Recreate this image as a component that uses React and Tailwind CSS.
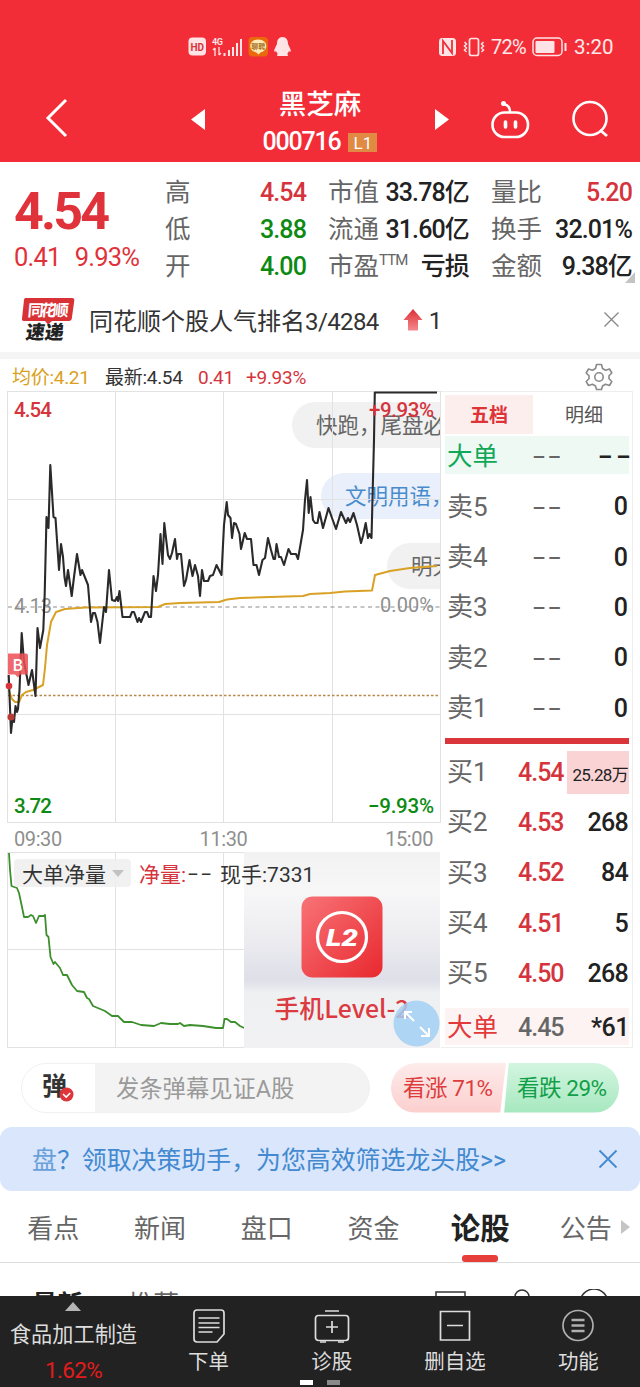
import React from 'react';
import clsx from 'clsx';

const PRICE_LINE =
    '8.7,675 11,733 12.5,718 14,722 15.5,706 17,712 18,709 19.5,690 21.7,633 24,662 28.5,685 32,670 35.5,696 37.5,628 40,648 43.3,630 44.7,594 46.5,517 48.5,528 50.3,465 53.5,517 55.5,518 59,570 61,544 63,557 64.5,577 66,586 68,570 71.7,596 74,577 77,554 80.5,575 82,570 88,585 91,622 93,613 95,613 97.5,622 100,643 104,607 106,612 109,570 112,600 115,601 117,597 118,601 119.5,591 122.5,617 130,617 132,612 134,612 137.5,622 139,618 141,622 145,612 147,612 149,617 151,617 153.5,576 156,591 158,575 160.5,534 162.5,564 164.3,523 166,538 168,555 170,559 172,553 175,539 177,559 178,554 181,554 184,586 186,580 189.5,560 192.5,576 195,565 198,576 200,596 202,570 204,581 208,581 210,576 213,575 216.5,565 219,570 221.5,575 224,525 226.7,502 228,515 230.5,518 232,538 234,523 236,524 239.5,534 241,549 244.7,533 247,539 251,539 253.5,565 256.5,565 259,575 262.5,560 265,558 268,538 271,550 273.5,559 275,559 276.5,544 279,557 281,557 284,565 288.5,549 291,554 296,554 298,559 303,530 305,500 307,480 308.7,513 310.5,497 313,520 315,523 317.5,523 319.5,512 323,528 328.5,508 332,518 336,529 341,512 346,523 348,518 350,522 353.5,513 357,525 361,543 363,536 365.7,523 368,538 369.5,534 371.5,538 374,440 374.8,392.5 437,392.5';

const AVG_LINE =
    '8.7,690 12,699 15,702 19,702 22,695 26,692 33,690 43,685 45,668 47,645 51,622 56,612 65,609 85,607.5 158,607 165,604 180,603 219,602 227,599.5 240,598 303,596 310,594 330,593 345,591.5 372,590.5 373.5,583 375,575 390,571 410,568 437,566';

const NET_LINE =
    '9,853 10,870 11.5,886 17,888 19,893 22,907 24,917 28,917 31,915 33,916 36,923 39,916 44,916 45,915 46.5,935 48.5,937 50.5,957 53.5,964 55,962 60,968 63,975 67,975 72,985 77,991 84,992 87,998 89,999 93,1006 105,1011 112,1016 118,1016 124,1022 132,1022 141,1025 154,1026 161,1023 170,1024 178,1024 180,1023 184,1026 190,1025 203,1026 216,1028 223,1028 224.5,1019 227,1019 231,1022 235,1022 240,1026 244,1028';

const sells = [5, 4, 3, 2, 1];

const buys = [
    { level: 1, price: '4.54', vol: '25.28万', hot: true },
    { level: 2, price: '4.53', vol: '268' },
    { level: 3, price: '4.52', vol: '84' },
    { level: 4, price: '4.51', vol: '5' },
    { level: 5, price: '4.50', vol: '268' },
];

const StatusBar = () => (
    <div className="flex h-[94px] items-center pl-[188px] pr-[26px] text-white/90">
        <svg width="106" height="22" viewBox="0 0 106 22">
            <rect x="0.5" y="1.5" width="17.5" height="18" rx="4" fill="#ffe3e5" />
            <text x="9.2" y="14.5" fontSize="10" fontWeight="700" textAnchor="middle" fill="#d8343c">HD</text>
            <text x="24" y="9" fontSize="9" fontWeight="700" textLength="11" fill="#ffe3e5">4G</text>
            <path d="M27 12v8M25 14l2-2M31 11v8M33 17l-2 2" stroke="#ffe3e5" strokeWidth="1.3" fill="none" />
            <path d="M36.5 20v-3M41 20v-6M45 20v-9M49 20v-13M53 20v-17" stroke="#ffe3e5" strokeWidth="2" />
            <rect x="60.5" y="1" width="19.5" height="19.5" rx="4" fill="#e9690c" />
            <path d="M70.3 3.5c5 0 8 3 8 6.5s-3 6-5.5 6.2L70.5 18.5 68 16.2c-3-.3-5.7-2.5-5.7-6.2s3-6.5 8-6.5z" fill="#ffe9b8" />
            <text x="70.3" y="13" fontSize="7" fontWeight="700" textAnchor="middle" fill="#a8741f">聊聘</text>
            <path d="M94.5 1c3.8 0 5.5 3 5.5 6.5 0 1.5 2.8 5 2.8 7.5 0 1.2-1.3.7-2 0-.2 1.2-1 2.3-1.8 3 1.5.5 1.5 2 0 2h-9c-1.5 0-1.5-1.5 0-2-.8-.7-1.6-1.8-1.8-3-.7.7-2 1.2-2 0 0-2.5 2.8-6 2.8-7.5C89 4 90.7 1 94.5 1z" fill="#ffe3e5" />
        </svg>
        <div className="ml-auto flex items-center">
            <svg width="48" height="20" viewBox="0 0 48 20">
                <path d="M3 1h10c3 0 4 1 4 4v10c0 3-1 4-4 4H4c-3 0-4-1-4-4V5c0-3 1-4 3-4z" fill="#ffe3e5" />
                <path d="M4 17V4l9 12V3" fill="none" stroke="#ef2f39" strokeWidth="1.8" />
                <rect x="30.5" y="1.5" width="9" height="17" rx="2" fill="none" stroke="#ffe3e5" strokeWidth="1.7" />
                <path d="M25.500 5l2 2-2 2 2 2-2 2 2 2M44.500 5l-2 2 2 2-2 2 2 2-2 2" fill="none" stroke="#ffe3e5" strokeWidth="1.5" />
            </svg>
            <span className="ml-1 w-[38px] text-[20px] tracking-[-0.04em]">72%</span>
            <svg className="ml-[3px]" width="36" height="20" viewBox="0 0 36 20">
                <rect x="1" y="1" width="29" height="17.5" rx="4" fill="none" stroke="#ffe3e5" strokeWidth="1.5" />
                <rect x="3.5" y="4" width="19" height="12" rx="1" fill="#ffe3e5" />
                <path d="M33.5 6v8" stroke="#ffe3e5" strokeWidth="2" />
            </svg>
            <span className="ml-[6px] w-[40px] text-[20.5px]">3:20</span>
        </div>
    </div>
);

const TitleBar = () => (
    <div className="flex h-[68px] items-start">
        <svg className="ml-[44px] mt-[3px]" width="26" height="42" viewBox="0 0 26 42">
            <path d="M22 3L4 21l18 18" fill="none" stroke="#fff" strokeWidth="3" />
        </svg>
        <svg className="ml-[121px] mt-[15px]" width="14" height="21" viewBox="0 0 14 21">
            <path d="M14 0v21L0 10.5z" fill="#fff" />
        </svg>
        <div className="-mt-[8px] flex w-[230px] flex-col items-center text-white">
            <h1 className="text-[27.5px] font-medium leading-[38px]">黑芝麻</h1>
            <div className="flex items-center leading-[36px]">
                <span className="text-[25px] font-medium tracking-[-0.05em]">000716</span>
                <span className="ml-2 h-[19px] w-[29px] bg-[#e08a43] text-center text-[17px] leading-[20px]">L1</span>
            </div>
        </div>
        <svg className="mt-[15px]" width="14" height="21" viewBox="0 0 14 21">
            <path d="M0 0v21l14-10.5z" fill="#fff" />
        </svg>
        <svg className="ml-[41px] mt-[6px]" width="41" height="40" viewBox="0 0 41 40">
            <rect x="2.5" y="12.5" width="35.5" height="24.5" rx="12" fill="none" stroke="#fff" strokeWidth="2.6" />
            <path d="M20 12c0-4-2-7-6-8" fill="none" stroke="#fff" strokeWidth="2.4" />
            <circle cx="13.5" cy="3.5" r="2.5" fill="#fff" />
            <path d="M15.5 22v5M25.5 22v5" stroke="#fff" strokeWidth="3.6" strokeLinecap="round" />
        </svg>
        <svg className="ml-[40px] mt-[6px]" width="40" height="40" viewBox="0 0 40 40">
            <circle cx="19" cy="18.5" r="16.5" fill="none" stroke="#fff" strokeWidth="2.6" />
            <path d="M29 30l7 6" stroke="#fff" strokeWidth="2.8" />
        </svg>
    </div>
);

const Stat = ({ label, value, sup, color = 'text-[#222]' }) => (
    <div className="flex h-[37px] items-center justify-between">
        <span className="flex whitespace-nowrap text-[25.5px] text-[#666]">
            {label}
            {sup && <sup className="top-0 -mt-px text-[15px] leading-[28px] tracking-[-0.06em]">{sup}</sup>}
        </span>
        <span className={clsx('whitespace-nowrap text-[25px] font-medium tracking-[-0.035em]', color)}>{value}</span>
    </div>
);

const Summary = () => (
    <section className="flex h-[126px] pl-[14px] pr-[7px] pt-[12px]">
        <div className="w-[151px] text-[#e0323a]">
            <div className="mt-[9px] text-[52px] font-bold leading-[58px] tracking-[-0.055em]">4.54</div>
            <div className="flex gap-[14px] text-[25.5px] leading-[33px] tracking-[-0.03em]">
                <span>0.41</span>
                <span>9.93%</span>
            </div>
        </div>
        <div className="w-[141px]">
            <Stat label="高" value="4.54" color="text-[#d5343d]" />
            <Stat label="低" value="3.88" color="text-[#0d8a12]" />
            <Stat label="开" value="4.00" color="text-[#0d8a12]" />
        </div>
        <div className="ml-[22px] w-[141px]">
            <Stat label="市值" value="33.78亿" />
            <Stat label="流通" value="31.60亿" />
            <Stat label="市盈" sup="TTM" value="亏损" />
        </div>
        <div className="relative ml-[22px] w-[141px]">
            <Stat label="量比" value="5.20" color="text-[#d5343d]" />
            <Stat label="换手" value="32.01%" />
            <Stat label="金额" value="9.38亿" />
            <svg className="absolute -right-[3px] bottom-[5px]" width="10" height="11" viewBox="0 0 10 11">
                <path d="M10 0v11H0z" fill="#c4c4c4" />
            </svg>
        </div>
    </section>
);

const NewsBar = () => (
    <section className="flex h-[64px] items-center pb-[1px] pl-[21px] pr-[20px]">
        <svg className="mt-px" width="56" height="48" viewBox="0 0 56 48">
            <path d="M5 2h46c2 0 2.500 1 2.300 2.500l-2.500 18c-.3 1.500-1 2.500-3 2.500H31l-4 3.500L24 25H3c-2 0-2.200-1-2-2.500L3 4c.2-1.500.8-2 2-2z" fill="#d93236" />
            <text x="7" y="20" fontSize="16" fontWeight="700" fill="#fff" textLength="41" transform="skewX(-5) translate(1 0)">同花顺</text>
            <text x="10" y="43.5" fontSize="19" fontWeight="900" fill="#222" textLength="38" transform="skewX(-8)">速递</text>
        </svg>
        <span className="ml-[12px] mt-[5px] whitespace-nowrap text-[24px] text-[#333]">同花顺个股人气排名<span className="tracking-[-0.025em]">3/4284</span></span>
        <svg className="ml-[24px]" width="20" height="22" viewBox="0 0 20 22">
            <defs>
                <linearGradient id="up" x1="0" x2="0" y1="0" y2="1">
                    <stop offset="0" stopColor="#dc2f36" />
                    <stop offset="1" stopColor="#f4898d" />
                </linearGradient>
            </defs>
            <path d="M10 0l9.5 11h-4.5v10.500H5V11H.5z" fill="url(#up)" />
        </svg>
        <span className="ml-[6px] mt-[3px] text-[24px] text-[#333]">1</span>
        <svg className="ml-auto mr-px" width="15" height="15" viewBox="0 0 15 15">
            <path d="M.5.5l14 14M14.5.5l-14 14" stroke="#888" strokeWidth="1.4" />
        </svg>
    </section>
);

const ChartHeader = () => (
    <div className="flex h-[32px] items-center pl-[12px] pr-[27px] pt-[3px] text-[19px] leading-[24px] tracking-[-0.015em]">
        <span className="mt-[3px] w-[93px] text-[#d9a11c]">均价:4.21</span>
        <span className="mt-[3px] w-[93px] text-[#333]">最新:4.54</span>
        <span className="mt-[3px] w-[48px] text-[#d5343d]">0.41</span>
        <span className="mt-[3px] text-[#d5343d]">+9.93%</span>
        <svg className="ml-auto" width="28" height="28" viewBox="0 0 28 28" fill="none" stroke="#8a8a8a" strokeWidth="1.6" strokeLinejoin="round">
            <path d="M11.5 1.5h5l1 4 3 1.700 4-1.200 2.300 4-2.800 2.800v2.900l2.800 2.800-2.300 4-4-1.200-3 1.700-1 3.500h-5l-1-3.500-3-1.700-4 1.200-2.300-4L4 15.700v-2.900L1.200 10l2.300-4 4 1.200 3-1.700z" />
            <circle cx="14" cy="14" r="4.2" />
        </svg>
    </div>
);

const Danmaku = ({ className, children }) => (
    <div className={clsx('absolute right-0 flex h-[46px] items-center whitespace-nowrap rounded-l-full pl-[24px] pt-[2px] text-[21.5px]', className)}>
        {children}
    </div>
);

const PriceChart = () => (
    <div className="relative h-[432px] w-[441px] overflow-hidden">
        <Danmaku className="left-[292px] top-[11px] bg-[#f1f1f1] text-[#666]">快跑，尾盘必</Danmaku>
        <Danmaku className="left-[321px] top-[82px] bg-[#e9effb] text-[#478bcd]">文明用语，</Danmaku>
        <Danmaku className="left-[387px] top-[152px] bg-[#f1f1f1] text-[#666]">明天</Danmaku>
        <svg className="relative block" width="441" height="432" viewBox="0 391 441 432">
            <g stroke="#e2e2e2" strokeWidth="1" fill="none">
                <rect x="7.5" y="391.5" width="433" height="431" />
                <path d="M115.5 392v430M223.5 392v430M332.5 392v430M8 499.5h432M8 714.5h432" />
            </g>
            <path d="M8 607h432" stroke="#8c8c8c" strokeWidth="1.2" strokeDasharray="4 3.5" />
            <path d="M8 695.5h432" stroke="#b8874a" strokeWidth="1.4" strokeDasharray="2.5 2" />
            <text x="14" y="612.5" fontSize="20" textLength="38" fill="#8f8f8f">4.13</text>
            <text x="434" y="612" fontSize="20" textAnchor="end" textLength="54" fill="#8f8f8f">0.00%</text>
            <polyline points={AVG_LINE} fill="none" stroke="#d9a126" strokeWidth="2" strokeLinejoin="round" />
            <polyline points={PRICE_LINE} fill="none" stroke="#2a2a2a" strokeWidth="2.1" strokeLinejoin="round" />
            <g fontSize="20.5" fontWeight="500">
                <text x="14" y="417" textLength="38" fill="#d5343d">4.54</text>
                <text x="434" y="416.5" textAnchor="end" textLength="65" fill="#d5343d">+9.93%</text>
                <text x="14" y="812.5" textLength="38" fill="#0d8a12">3.72</text>
                <text x="434" y="812.5" textAnchor="end" textLength="66" fill="#0d8a12">−9.93%</text>
            </g>
            <path d="M8 653.5h18q2 0 2 2v17q0 2-2 2h-6l-2 3-3-3H8z" fill="#ec4d55" fillOpacity=".85" />
            <text x="17.7" y="670.5" fontSize="16" fontWeight="500" textAnchor="middle" fill="#fff">B</text>
            <circle cx="9" cy="686" r="3.3" fill="#d9343a" />
            <circle cx="11" cy="717" r="3.5" fill="#b83a34" />
        </svg>
    </div>
);

const Dashes = ({ className }) => (
    <span className={clsx('inline-block origin-left scale-x-[1.7] tracking-[2px]', className)}>--</span>
);

const NetChart = () => (
    <div className="relative flex h-[196px] w-[441px]">
        <svg className="block" width="244" height="196" viewBox="0 852 244 196">
            <path d="M244 852.5H7.500v195H244M115.5 852v195M223.5 852v195M8 949.5h236" fill="none" stroke="#e2e2e2" />
            <polyline points={NET_LINE} fill="none" stroke="#3c8f2c" strokeWidth="1.8" strokeLinejoin="round" />
        </svg>
        <div className="flex w-[196px] flex-col items-center bg-[linear-gradient(180deg,#f2f2f3_0%,#f7f7f8_20%,#ececf0_45%,#dedfe8_65%,#eff0f2_72%,#f1f1f3_100%)] pt-[44px]">
            <svg width="82" height="82" viewBox="0 0 82 82">
                <defs>
                    <linearGradient id="l2" x1="0" x2="1" y1="0" y2="1">
                        <stop offset="0" stopColor="#f87377" />
                        <stop offset="1" stopColor="#e8292f" />
                    </linearGradient>
                </defs>
                <rect x=".5" y=".5" width="81" height="81" rx="11" fill="url(#l2)" />
                <circle cx="41" cy="41" r="24.5" fill="none" stroke="#fff" strokeWidth="3.2" />
                <text x="41" y="49.5" fontSize="23" fontWeight="900" fontStyle="italic" textAnchor="middle" textLength="32" lengthAdjust="spacingAndGlyphs" fill="#fff">L2</text>
            </svg>
            <div className="mt-[11px] whitespace-nowrap font-['Noto_Sans_CJK_SC',sans-serif] text-[24.8px] font-medium leading-[36px] text-[#dc3a41]">手机Level-2</div>
        </div>
        <div className="absolute left-[14px] top-[7px] flex h-[28px] items-center whitespace-nowrap text-[21px] leading-[28px] text-[#333]">
            <div className="flex h-[28px] w-[117px] items-center justify-between rounded-sm bg-[#efefef]/90 pl-[8px] pr-[7px]">
                <span className="mt-[3px]">大单净量</span>
                <svg width="12" height="7" viewBox="0 0 12 7">
                    <path d="M0 0h12L6 7z" fill="#c2c2c2" />
                </svg>
            </div>
            <span className="ml-[8px] mt-[3px] w-[48px] text-[#d5343d]">净量:</span>
            <span className="flex w-[33px]"><Dashes className="ml-[1px]" /></span>
            <span className="mt-[3px]">现手:7331</span>
        </div>
        <svg className="absolute bottom-px left-[393px]" width="47" height="47" viewBox="0 0 47 47">
            <circle cx="23.5" cy="23.5" r="23" fill="#a3d0f5" fillOpacity=".85" />
            <path d="M21 21l-9-9M12 19v-7h7M27 27l9 9M36 28v8h-8" fill="none" stroke="#fff" strokeWidth="2" />
        </svg>
    </div>
);

const OrderBook = () => (
    <aside className="h-[657px] w-[192px] border border-l-0 border-[#eee] pl-[4px] pt-[3px] text-[#222]">
        <div className="flex h-[41px] w-[184px] items-start text-[19px]">
            <span className="h-[39px] w-[88px] bg-[#fdeeee] text-center font-bold leading-[42px] text-[#dd3438]">五档</span>
            <span className="flex-1 pl-[6px] text-center leading-[42px] text-[#555]">明细</span>
        </div>
        <div className="flex h-[38px] w-[184px] items-center bg-[#eff9f4] pl-[2px] pt-[2px] text-[25.5px] leading-[36px]">
            <span className="w-[86px] text-[#0fa858]">大单</span>
            <Dashes className="text-[#666]" />
            <Dashes className="ml-[47px] font-medium" />
        </div>
        <div className="pb-[5px] pt-[8px]">
            {sells.map((n) => (
                <div key={n} className="flex h-[50.3px] w-[184px] items-center pl-[2px] text-[26px]">
                    <span className="w-[86px] text-[#666]">卖{n}</span>
                    <Dashes className="text-[#666]" />
                    <span className="ml-auto pr-px text-[25px] font-medium">0</span>
                </div>
            ))}
        </div>
        <div className="h-[6px] w-[184px] bg-[#d9353b]" />
        <div className="pt-[3px]">
            {buys.map((b) => (
                <div key={b.level} className="flex h-[50.3px] w-[184px] items-center pl-[2px] text-[26px]">
                    <span className="w-[71px] text-[#666]">买{b.level}</span>
                    <span className="text-[25px] font-medium tracking-[-0.04em] text-[#d5343d]">{b.price}</span>
                    {b.hot ? (
                        <span className="ml-auto h-[43px] w-[62px] bg-[#fad3d5] pr-px text-right text-[17px] leading-[48px] tracking-[-0.04em]">{b.vol}</span>
                    ) : (
                        <span className="ml-auto pr-px text-[25px] font-medium tracking-[-0.03em]">{b.vol}</span>
                    )}
                </div>
            ))}
        </div>
        <div className="mt-[9px] flex h-[37px] w-[184px] items-center bg-[#fdf3f3] pl-[2px] pt-[2px] text-[25.5px] leading-[35px]">
            <span className="w-[71px] text-[#e23a3a]">大单</span>
            <span className="text-[25px] font-medium tracking-[-0.04em] text-[#666]">4.45</span>
            <span className="ml-auto text-[25px] font-medium tracking-[-0.02em]">*61</span>
        </div>
    </aside>
);

const VoteBar = () => (
    <section className="flex h-[79px] items-center pl-[21px] pr-[20px]">
        <div className="flex h-[50px] w-[349px] overflow-hidden rounded-full border border-[#f1f1f1] bg-[#f3f3f3]">
            <div className="relative w-[73px] bg-white pl-[20px] text-[25px] font-bold leading-[46px] text-[#333]">
                弹
                <svg className="absolute left-[37px] top-[23px]" width="15" height="15" viewBox="0 0 15 15">
                    <circle cx="7.5" cy="7.5" r="7" fill="#dd3539" />
                    <path d="M4 7l3.200 3 4-4" fill="none" stroke="#fff" strokeWidth="1.7" />
                </svg>
            </div>
            <span className="pl-[21px] text-[23.3px] leading-[51px] text-[#9a9a9a]">发条弹幕见证A股</span>
        </div>
        <div className="ml-[21px] flex h-[50px] text-[22.5px] leading-[50px]">
            <div className="w-[115px] rounded-l-full bg-linear-to-b from-[#fdeceb] to-[#fbcfce] pl-[12px] tracking-[-0.02em] text-[#dc3d3c] [clip-path:polygon(0_0,100%_0,95%_100%,0_100%)]">看涨 71%</div>
            <div className="-ml-[3px] w-[116px] rounded-r-full bg-linear-to-b from-[#d3f5e0] to-[#a6e8bf] pl-[14px] tracking-[-0.02em] text-[#129f49] [clip-path:polygon(5%_0,100%_0,100%_100%,1%_100%)]">看跌 29%</div>
        </div>
    </section>
);

const Banner = () => (
    <section className="flex h-[64px] items-center rounded-xl bg-[#d9e6fb] pl-[32px] pr-[22px] text-[#4389d0]">
        <span className="mt-[4px] whitespace-nowrap text-[24.9px]"><span className="opacity-75">盘</span>？领取决策助手，为您高效筛选龙头股&gt;&gt;</span>
        <svg className="ml-auto" width="20" height="20" viewBox="0 0 20 20">
            <path d="M1.5 1.5l17 17M18.5 1.5l-17 17" stroke="#4389d0" strokeWidth="1.8" />
        </svg>
    </section>
);

const Tabs = () => (
    <nav className="flex h-[72px] border-b border-[#ddd] text-[26px] leading-[76px] text-[#666]">
        {['看点', '新闻', '盘口', '资金'].map((tab) => (
            <span key={tab} className="w-[106.7px] text-center">{tab}</span>
        ))}
        <span className="relative w-[107px] text-center text-[29.5px] font-bold text-[#222]">
            论股
            <i className="absolute left-[35px] top-[64px] h-[7px] w-[36px] rounded-[3px] bg-[#e63f39]" />
        </span>
        <span className="ml-[26px]">公告</span>
        <svg className="ml-[9px] mt-[29px]" width="9" height="14" viewBox="0 0 9 14">
            <path d="M0 0l9 7-9 7z" fill="#c4c4c4" />
        </svg>
    </nav>
);

const FeedHeader = () => (
    <section className="flex h-[33px] items-start overflow-hidden pl-[32px] pt-[26px] text-[25.5px] leading-[30px] text-[#666]">
        <span className="w-[96px] font-bold text-[#222]">最新</span>
        <span className="w-[307px]">推荐</span>
        <svg width="180" height="30" viewBox="0 0 180 30" fill="none" stroke="#333" strokeWidth="1.5">
            <rect x="1" y="3" width="29" height="24" />
            <circle cx="87" cy="8" r="7" />
            <circle cx="159" cy="14" r="14" />
        </svg>
    </section>
);

const NavItem = ({ label, children }) => (
    <div className="flex w-[123.3px] flex-col items-center pt-[10px]">
        <svg width="40" height="40" viewBox="0 0 40 40" fill="none" stroke="#ddd" strokeWidth="1.7">{children}</svg>
        <span className="text-[20.5px] leading-[32px]">{label}</span>
    </div>
);

const BottomBar = () => (
    <footer className="relative flex h-[91px] bg-[#222] text-[#ddd]">
        <div className="flex w-[147px] flex-col items-center pt-[6px]">
            <svg width="16" height="9" viewBox="0 0 16 9">
                <path d="M8 0l8 9H0z" fill="#b5b5b5" />
            </svg>
            <span className="mt-[8px] text-[21.2px] leading-[32px]">食品加工制造</span>
            <span className="mt-[3px] text-[22.5px] leading-[32px] tracking-[-0.03em] text-[#e31b1b]">1.62%</span>
        </div>
        <NavItem label="下单">
            <path d="M8 4h24q3 0 3 3v21l-7 8H8q-3 0-3-3V7q0-3 3-3zM9.5 12h21M9.5 17h21M9.5 21.5h21M9.5 26h14" />
        </NavItem>
        <NavItem label="诊股">
            <rect x="3.5" y="9.5" width="33" height="25" rx="3" />
            <path d="M13 5h14M20 15v12M14 21h12M8 36h6M26 36h6" />
        </NavItem>
        <NavItem label="删自选">
            <path d="M5.5 5.5h29v28.500h-29zM12 19.5h16" />
        </NavItem>
        <NavItem label="功能">
            <g stroke="#b0b0b0">
                <circle cx="20" cy="19.5" r="15" />
                <path d="M13.5 14h13M13.5 19.5h13M13.5 25h13" strokeWidth="2.5" />
            </g>
        </NavItem>
        <div className="absolute bottom-[2px] left-[300px] flex gap-[14px]">
            <i className="h-[5px] w-[13px] bg-white" />
            <i className="h-[5px] w-[13px] bg-[#8a8a8a]" />
        </div>
    </footer>
);

export default function App() {
    return (
        <div className="h-[1387px] w-[640px] overflow-hidden bg-white font-['Roboto','Noto_Sans_CJK_SC',sans-serif]">
            <header className="bg-[#f32d37]">
                <StatusBar />
                <TitleBar />
            </header>
            <Summary />
            <NewsBar />
            <div className="h-[7px] bg-[#f5f5f5]" />
            <ChartHeader />
            <main className="flex">
                <div className="w-[441px]">
                    <PriceChart />
                    {/* time axis */}
                    <div className="flex h-[29px] items-center justify-between pl-[14px] pr-[8px] pt-[2px] text-[20px] tracking-[-0.02em] text-[#8f8f8f]">
                        <span>09:30</span>
                        <span>11:30</span>
                        <span>15:00</span>
                    </div>
                    <NetChart />
                </div>
                <OrderBook />
            </main>
            <VoteBar />
            <Banner />
            <Tabs />
            <FeedHeader />
            <BottomBar />
        </div>
    );
}
